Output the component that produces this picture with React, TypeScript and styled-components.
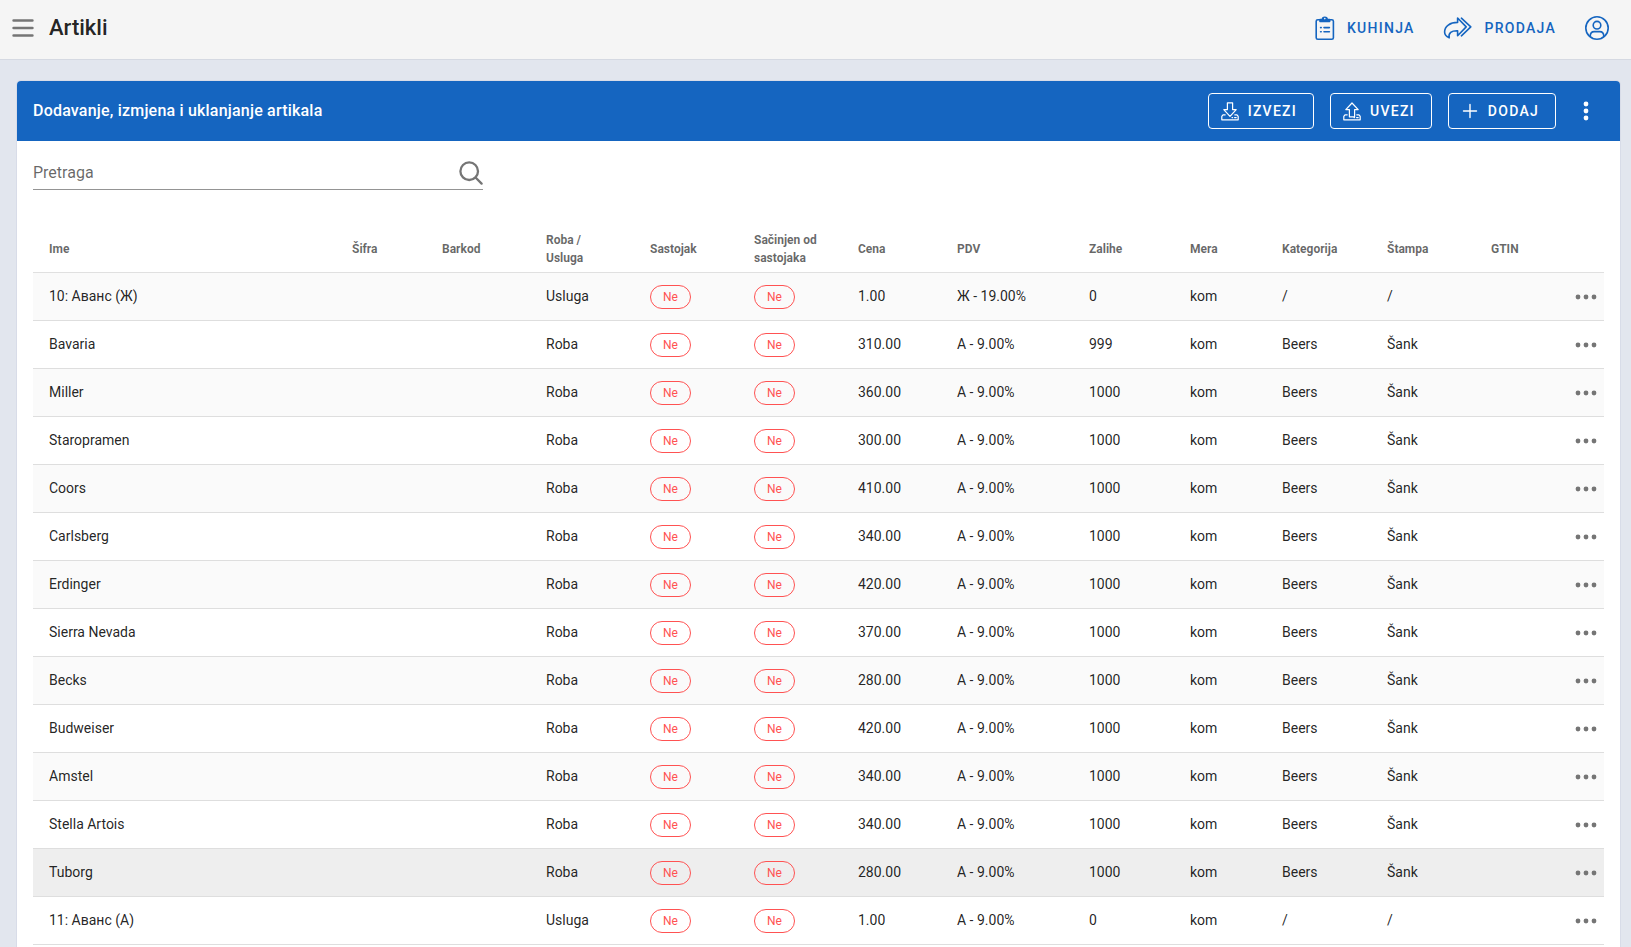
import React from "react";
import styled, { createGlobalStyle, css } from "styled-components";

const GlobalStyle = createGlobalStyle`
  *, *::before, *::after { box-sizing: border-box; }
  body {
    margin: 0;
    background: #e2e6ee;
    color: rgba(0, 0, 0, 0.87);
    font-family: Roboto, "Noto Sans", sans-serif;
    font-size: 14px;
    line-height: 20px;
  }
  button { font-family: inherit; cursor: pointer; }
`;

const Shell = styled.div`
  display: flex;
  flex-direction: column;
  min-height: 100vh;
`;

const TopBar = styled.header`
  display: flex;
  align-items: center;
  height: 60px;
  padding: 0 21px 4px 9px;
  background: #f5f5f5;
  border-bottom: 1px solid #d5d9e2;
`;

const PageTitle = styled.h1`
  flex: 1;
  margin: 0 0 0 12px;
  font-size: 22px;
  font-weight: 500;
  line-height: 28px;
`;

const IconButton = styled.button<{ $tone?: string; $size?: number }>`
  display: inline-flex;
  align-items: center;
  justify-content: center;
  width: ${(p) => p.$size ?? 28}px;
  height: ${(p) => p.$size ?? 28}px;
  padding: 0;
  border: 0;
  background: none;
  color: ${(p) => p.$tone ?? "#757575"};
  vertical-align: middle;
`;

const buttonText = css`
  font-size: 14px;
  font-weight: 500;
  letter-spacing: 0.09em;
  line-height: 20px;
  text-transform: uppercase;
  text-decoration: none;
`;

const Nav = styled.nav`
  display: flex;
  align-items: center;
  gap: 28px;
`;

const NavLink = styled.a`
  ${buttonText}
  display: inline-flex;
  align-items: center;
  gap: 12px;
  color: #1565c0;
`;

const Page = styled.main`
  display: flex;
  flex: 1;
  flex-direction: column;
  padding: 20px 10px 0 16px;
`;

const Card = styled.section`
  flex: 1;
  background: #fff;
  border: 1px solid #d8dce8;
  border-bottom: 0;
  border-radius: 5px 5px 0 0;
`;

const CardHeader = styled.div`
  display: flex;
  align-items: center;
  gap: 16px;
  height: 60px;
  padding: 0 20px 0 16px;
  border-radius: 4px 4px 0 0;
  background: #1565c0;
  color: #fff;
`;

const CardTitle = styled.h2`
  flex: 1;
  margin: 0;
  font-size: 16px;
  font-weight: 500;
  letter-spacing: 0.0125em;
  line-height: 24px;
`;

const OutlineButton = styled.button`
  ${buttonText}
  display: inline-flex;
  align-items: center;
  gap: 9px;
  height: 36px;
  padding: 0 16px 0 12px;
  border: 1px solid #fff;
  border-radius: 4px;
  background: none;
  color: #fff;
`;

const CardBody = styled.div`
  padding: 16px 16px 0;
`;

const SearchField = styled.label`
  display: flex;
  align-items: center;
  width: 450px;
  max-width: 100%;
  height: 33px;
  margin-bottom: 35px;
  border-bottom: 1px solid #949494;
  color: #757575;
`;

const SearchInput = styled.input`
  flex: 1;
  min-width: 0;
  padding: 0;
  border: 0;
  outline: 0;
  background: none;
  color: inherit;
  font: 16px/24px Roboto, sans-serif;
  &::placeholder { color: rgba(0, 0, 0, 0.6); opacity: 1; }
`;

const Table = styled.table`
  width: 100%;
  table-layout: fixed;
  border-collapse: separate;
  border-spacing: 0;
`;

const HeadCell = styled.th<{ $width?: number }>`
  width: ${(p) => (p.$width ? `${p.$width}px` : "auto")};
  height: 48px;
  padding: 0 16px;
  border-bottom: 1px solid #e0e0e0;
  color: rgba(0, 0, 0, 0.6);
  font-size: 12px;
  font-weight: 700;
  line-height: 18px;
  text-align: left;
`;

const Cell = styled.td`
  height: 48px;
  padding: 0 16px 2px;
  border-bottom: 1px solid #dedede;
  line-height: 20px;
  white-space: nowrap;
`;

const ChipCell = styled(Cell)`
  padding-bottom: 0;
`;

const ActionCell = styled(Cell)`
  padding: 0 4px 0 0;
  text-align: right;
`;

const Row = styled.tr<{ $hovered?: boolean }>`
  background: ${(p) => (p.$hovered ? "#eeeeee" : "#fff")};
  &:nth-child(odd) { background: ${(p) => (p.$hovered ? "#eeeeee" : "#fafafa")}; }
`;

const Chip = styled.span`
  display: inline-block;
  height: 24px;
  padding: 0 12px;
  border: 1px solid #ff5252;
  border-radius: 12px;
  color: #ff5252;
  font-size: 12px;
  line-height: 22px;
  vertical-align: middle;
`;

const Line = styled.svg<{ $stroke?: number }>`
  display: block;
  flex: none;
  fill: none;
  stroke: currentColor;
  stroke-width: ${(p) => p.$stroke ?? 1.5};
  stroke-linejoin: round;
  stroke-linecap: round;
`;

const MenuIcon = () => (
  <Line width="22" height="20" viewBox="0 0 22 20" $stroke={2.6}>
    <path d="M1.6 2.500h18.800M1.600 10h18.800M1.600 17.500h18.800" />
  </Line>
);

const ClipboardIcon = () => (
  <Line width="20" height="26" viewBox="0 0 20 26" $stroke={1.6}>
    <rect x="1.2" y="4.7" width="17.2" height="19.6" rx="1.6" />
    <path d="M5 6.4V4.6h2.4a2.4 2.4 0 0 1 4.8 0h2.4v1.8z" fill="currentColor" />
    <circle cx="9.8" cy="3.6" r="0.8" fill="#f5f5f5" stroke="none" />
    <path d="M5.6 12.6h.6M9 12.6h5.4M5.6 16.8h.6M9 16.8h5.4" />
  </Line>
);

const ShareIcon = () => (
  <Line width="30" height="24" viewBox="0 0 30 24" $stroke={1.6}>
    <path d="M14.600 2v4.400C7 6.400 1.600 10.200 1.600 16c0 2.400 1.600 4.500 4.600 5.800C5.200 17 8.400 14.600 14.600 14.800v5l8.600-8.900z" />
    <path d="M18.400 2.200l9.400 8.700-9.400 8.900" />
  </Line>
);

const UserIcon = () => (
  <Line width="26" height="26" viewBox="0 0 26 26" $stroke={1.6}>
    <circle cx="13" cy="13" r="11.200" />
    <circle cx="13" cy="10.200" r="3.800" />
    <path d="M6.200 21.600c0-3.400 1.800-5 4-5h5.600c2.200 0 4 1.600 4 5" />
  </Line>
);

const TrayIcon = ({ up }: { up?: boolean }) => (
  <Line width="18" height="19" viewBox="0 0 18 19" $stroke={1.2}>
    {up ? (
      <path d="M6.400 14.800V7.600H2.800L9 1l6.200 6.600h-3.600v7.200z" />
    ) : (
      <path d="M6.400 .8h5.200v6.800h3.600L9 14.400 2.800 7.600h3.600z" />
    )}
    <path d="M4.200 12.800H2L.8 14.400v3.400h16.400v-3.400L16 12.800h-2.200" />
    <path d="M11 15.600h.6M13.600 15.600h1.600" />
  </Line>
);

const PlusIcon = () => (
  <Line width="18" height="18" viewBox="0 0 18 18" $stroke={1.4}>
    <path d="M9 2.500v13M2.500 9h13" />
  </Line>
);

const SearchIcon = () => (
  <Line width="24" height="24" viewBox="0 0 24 24" $stroke={2.3}>
    <circle cx="10.200" cy="10.200" r="8.800" />
    <path d="M16.800 16.800l5.800 5.800" />
  </Line>
);

const Dots = ({ vertical }: { vertical?: boolean }) => (
  <svg width={vertical ? 6 : 22} height={vertical ? 20 : 6} fill="currentColor">
    {[0, 1, 2].map((i) =>
      vertical ? (
        <circle key={i} cx="3" cy={3 + i * 7} r="2.4" />
      ) : (
        <circle key={i} cx={3 + i * 8} cy="3" r="2.4" />
      )
    )}
  </svg>
);

const columns: { label: string; width?: number }[] = [
  { label: "Ime" },
  { label: "Šifra", width: 90 },
  { label: "Barkod", width: 104 },
  { label: "Roba / Usluga", width: 104 },
  { label: "Sastojak", width: 104 },
  { label: "Sačinjen od sastojaka", width: 104 },
  { label: "Cena", width: 99 },
  { label: "PDV", width: 132 },
  { label: "Zalihe", width: 101 },
  { label: "Mera", width: 92 },
  { label: "Kategorija", width: 105 },
  { label: "Štampa", width: 104 },
  { label: "GTIN", width: 71 },
];

interface Article {
  name: string;
  kind?: string;
  price: string;
  tax?: string;
  stock?: string;
  category?: string;
  printer?: string;
  hovered?: boolean;
}

const advance = { kind: "Usluga", price: "1.00", stock: "0", category: "/", printer: "/" };

const articles: Article[] = [
  { name: "10: Аванс (Ж)", ...advance, tax: "Ж - 19.00%" },
  { name: "Bavaria", price: "310.00", stock: "999" },
  { name: "Miller", price: "360.00" },
  { name: "Staropramen", price: "300.00" },
  { name: "Coors", price: "410.00" },
  { name: "Carlsberg", price: "340.00" },
  { name: "Erdinger", price: "420.00" },
  { name: "Sierra Nevada", price: "370.00" },
  { name: "Becks", price: "280.00" },
  { name: "Budweiser", price: "420.00" },
  { name: "Amstel", price: "340.00" },
  { name: "Stella Artois", price: "340.00" },
  { name: "Tuborg", price: "280.00", hovered: true },
  { name: "11: Аванс (А)", ...advance },
];

export default function App() {
  return (
    <Shell>
      <GlobalStyle />
      <TopBar>
        <IconButton aria-label="Meni"><MenuIcon /></IconButton>
        <PageTitle>Artikli</PageTitle>
        <Nav>
          <NavLink href="#kuhinja"><ClipboardIcon />Kuhinja</NavLink>
          <NavLink href="#prodaja"><ShareIcon />Prodaja</NavLink>
          <IconButton aria-label="Profil" $tone="#1565c0" $size={26}><UserIcon /></IconButton>
        </Nav>
      </TopBar>
      <Page>
        <Card>
          <CardHeader>
            <CardTitle>Dodavanje, izmjena i uklanjanje artikala</CardTitle>
            <OutlineButton><TrayIcon />Izvezi</OutlineButton>
            <OutlineButton><TrayIcon up />Uvezi</OutlineButton>
            <OutlineButton><PlusIcon />Dodaj</OutlineButton>
            <IconButton aria-label="Više opcija" $tone="#fff"><Dots vertical /></IconButton>
          </CardHeader>
          <CardBody>
            <SearchField>
              <SearchInput type="text" placeholder="Pretraga" aria-label="Pretraga" />
              <SearchIcon />
            </SearchField>
            <Table>
              <thead>
                <tr>
                  {columns.map((c) => (
                    <HeadCell key={c.label} $width={c.width} scope="col">{c.label}</HeadCell>
                  ))}
                  <HeadCell $width={58} aria-label="Akcije" />
                </tr>
              </thead>
              <tbody>
                {articles.map((a) => (
                  <Row key={a.name} $hovered={a.hovered}>
                    <Cell>{a.name}</Cell>
                    <Cell />
                    <Cell />
                    <Cell>{a.kind ?? "Roba"}</Cell>
                    <ChipCell><Chip>Ne</Chip></ChipCell>
                    <ChipCell><Chip>Ne</Chip></ChipCell>
                    <Cell>{a.price}</Cell>
                    <Cell>{a.tax ?? "А - 9.00%"}</Cell>
                    <Cell>{a.stock ?? "1000"}</Cell>
                    <Cell>kom</Cell>
                    <Cell>{a.category ?? "Beers"}</Cell>
                    <Cell>{a.printer ?? "Šank"}</Cell>
                    <Cell />
                    <ActionCell>
                      <IconButton aria-label="Akcije"><Dots /></IconButton>
                    </ActionCell>
                  </Row>
                ))}
              </tbody>
            </Table>
          </CardBody>
        </Card>
      </Page>
    </Shell>
  );
}
